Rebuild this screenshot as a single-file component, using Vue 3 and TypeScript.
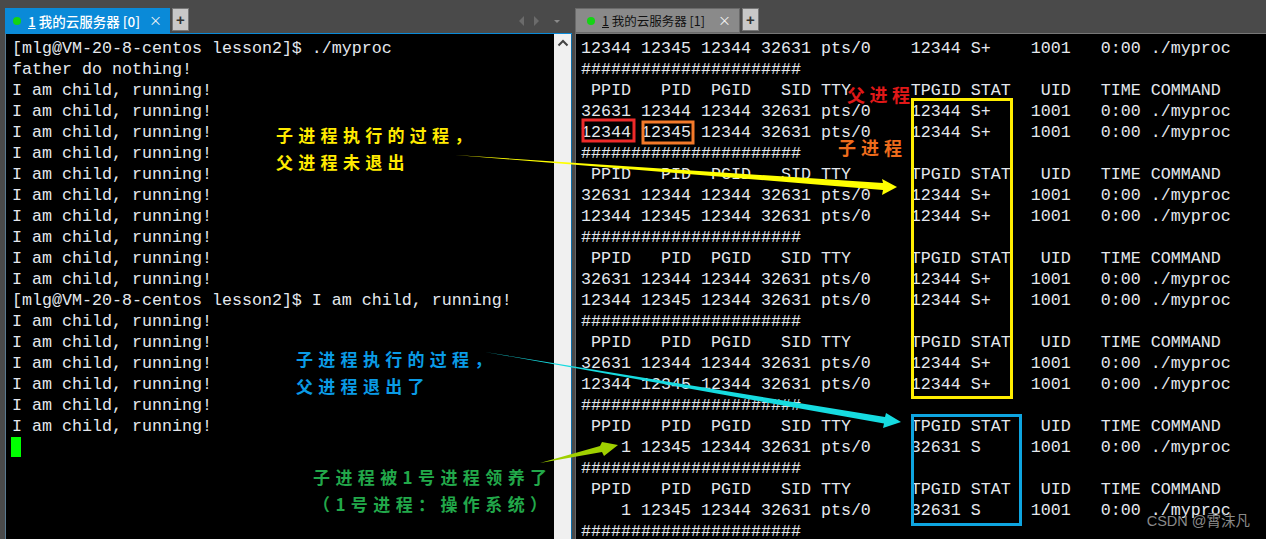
<script setup lang="ts">
const child = 'I am child, running!'
const leftLines: string[] = [
  '[mlg@VM-20-8-centos lesson2]$ ./myproc',
  'father do nothing!',
  ...Array(10).fill(child),
  '[mlg@VM-20-8-centos lesson2]$ I am child, running!',
  ...Array(6).fill(child),
]
const hash = '######################'
const head = ' PPID   PID  PGID   SID TTY      TPGID STAT   UID   TIME COMMAND'
const parent = '32631 12344 12344 32631 pts/0    12344 S+    1001   0:00 ./myproc'
const kid = '12344 12345 12344 32631 pts/0    12344 S+    1001   0:00 ./myproc'
const orphan = '    1 12345 12344 32631 pts/0    32631 S     1001   0:00 ./myproc'
const rightLines: string[] = [
  kid, hash,
  head, parent, kid, hash,
  head, parent, kid, hash,
  head, parent, kid, hash,
  head, parent, kid, hash,
  head, orphan, hash,
  head, orphan, hash,
]
</script>

<template>
  <div class="screen">
    <div class="pane left-pane">
      <div class="tabbar">
        <div class="tab active">
          <span class="dot"></span>
          <span class="tab-title"><u>1</u> 我的云服务器 [0]</span>
          <span class="close">×</span>
        </div>
        <div class="plus">+</div>
        <div class="nav">
          <svg width="50" height="12" viewBox="0 0 50 12">
            <path d="M6 1 1 6l5 5z" fill="#6b6b6b" />
            <path d="M16 1l5 5-5 5z" fill="#6b6b6b" />
            <path d="M36 5h6l-3 3z" fill="#8a8a8a" />
          </svg>
        </div>
      </div>
      <div class="body">
        <div class="term left-term">
          <div v-for="(l, i) in leftLines" :key="i" class="line">{{ l }}</div>
          <div class="line"><span class="cursor"></span></div>
        </div>
        <div class="scroll">
          <svg width="12" height="8" viewBox="0 0 12 8"><path d="M1.5 6.500 6 2l4.500 4.500" fill="none" stroke="#444" stroke-width="2" /></svg>
        </div>
      </div>
    </div>
    <div class="pane right-pane">
      <div class="tabbar">
        <div class="tab idle">
          <span class="dot"></span>
          <span class="tab-title"><u>1</u> 我的云服务器 [1]</span>
          <span class="close">×</span>
        </div>
        <div class="plus">+</div>
      </div>
      <div class="body">
        <div class="term right-term">
          <div v-for="(l, i) in rightLines" :key="i" class="line">{{ l }}</div>
        </div>
      </div>
    </div>

    <svg class="overlay" width="1266" height="539" viewBox="0 0 1266 539">
      <rect x="583" y="120" width="51" height="21" fill="none" stroke="#ee2a2a" stroke-width="3" />
      <rect x="643" y="122" width="50" height="21" fill="none" stroke="#f47a2a" stroke-width="3" />
      <rect x="912.500" y="99.500" width="99" height="298" fill="none" stroke="#ffee00" stroke-width="3" />
      <rect x="912.500" y="415.500" width="108" height="109" fill="none" stroke="#0ea5e0" stroke-width="3" />
      <polygon points="455,155 883,183 882,179 897,187 882,195 883,190" fill="#ffff00" />
      <polygon points="485,352 885,417 886,413 901,422 883,428 884,423.500" fill="#16dbe0" />
      <polygon points="540,463 600,446 602,442 618,445 604,456 602,452" fill="#a0d000" />
    </svg>

    <div class="note note-yellow">子进程执行的过程，<br />父进程未退出</div>
    <div class="note note-blue">子进程执行的过程，<br />父进程退出了</div>
    <div class="note note-green">子进程被1号进程领养了<br />（1号进程：操作系统）</div>
    <div class="note note-red">父进程</div>
    <div class="note note-orange">子进程</div>
    <div class="mark">CSDN @霄沫凡</div>
  </div>
</template>

<style>
html, body { margin: 0; background: #000; overflow: hidden; }
</style>

<style scoped>
.screen {
  position: relative;
  width: 1266px;
  height: 539px;
  display: flex;
  overflow: hidden;
  background: #4a4a4a;
  gap: 3px;
}
.pane { display: flex; flex-direction: column; }
.left-pane { width: 567px; margin-left: 5px; }
.right-pane { flex: 1; }
.tabbar {
  height: 33px;
  flex: none;
  display: flex;
  align-items: flex-end;
  box-sizing: border-box;
  padding-top: 8px;
  font-family: "Noto Sans CJK SC", "Liberation Sans", sans-serif;
  font-size: 13.500px;
}
.tab {
  width: 165px;
  height: 25px;
  box-sizing: border-box;
  display: flex;
  align-items: center;
  padding-left: 8px;
  position: relative;
}
.tab.active { background: #0a8ad8; color: #fff; font-weight: 500; }
.tab.idle { background: #8a8a8a; color: #111; border: 1px solid #6a6a6a; padding-left: 11px; font-size: 12.500px; }
.dot { width: 8px; height: 8px; border-radius: 50%; background: #14d414; margin-right: 7px; flex: none; }
.tab-title { white-space: nowrap; }
.close { position: absolute; right: 8px; top: 2px; font-size: 13px; font-weight: 400; color: #f4f4f4; }
.idle .close { right: 8px; top: 1px; }
.plus {
  width: 17px;
  height: 23px;
  margin-left: 2px;
  margin-bottom: 2px;
  background: #c8c8c8;
  color: #333;
  font: bold 15px/21px "Liberation Sans", sans-serif;
  text-align: center;
  border: 1px solid #777;
  box-sizing: border-box;
}
.nav { margin-left: auto; margin-right: 4px; height: 24px; display: flex; align-items: center; }
.left-pane .body { border-top: 1px solid #0a8ad8; border-left: 1px solid #5a7a90; }
.body { flex: 1; display: flex; background: #000; min-height: 0; }
.right-pane .body { border-left: 1px solid #666; border-top: 1px solid #777; }
.term {
  flex: 1;
  font-family: "Liberation Mono", monospace;
  font-size: 16.670px;
  line-height: 21px;
  color: #e4e8ee;
  white-space: pre;
  overflow: hidden;
  padding-top: 4px;
  box-sizing: border-box;
}
.left-term { padding-left: 6px; }
.right-term { padding-left: 5px; }
.line { height: 21px; }
.cursor { display: inline-block; width: 10px; height: 20px; margin-left: -1px; background: #00ff00; vertical-align: top; }
.scroll {
  width: 18px;
  flex: none;
  background: #f0f0f0;
  border-right: 1px solid #0a6ca8;
  display: flex;
  justify-content: center;
  align-items: flex-start;
  padding-top: 5px;
  box-sizing: border-box;
}
.overlay { position: absolute; left: 0; top: 0; pointer-events: none; }
.note {
  position: absolute;
  font-family: "Noto Sans CJK SC", sans-serif;
  font-size: 17px;
  line-height: 27px;
  font-weight: 700;
  letter-spacing: 5.300px;
  white-space: nowrap;
}
.note-yellow { left: 276px; top: 121px; color: #ffea00; }
.note-blue { left: 296px; top: 345px; color: #0a9be6; }
.note-green { left: 313px; top: 463px; color: #22a84a; text-align: center; letter-spacing: 5.400px; }
.note-red { left: 847px; top: 81px; color: #e01818; font-size: 18px; letter-spacing: 4.500px; }
.note-orange { left: 838px; top: 134px; color: #ee6c1c; font-size: 18px; letter-spacing: 5px; }
.mark {
  position: absolute;
  right: 16px;
  bottom: 9px;
  font: 14.500px "Liberation Sans", "Noto Sans CJK SC", sans-serif;
  color: #8a8a8a;
}
</style>
